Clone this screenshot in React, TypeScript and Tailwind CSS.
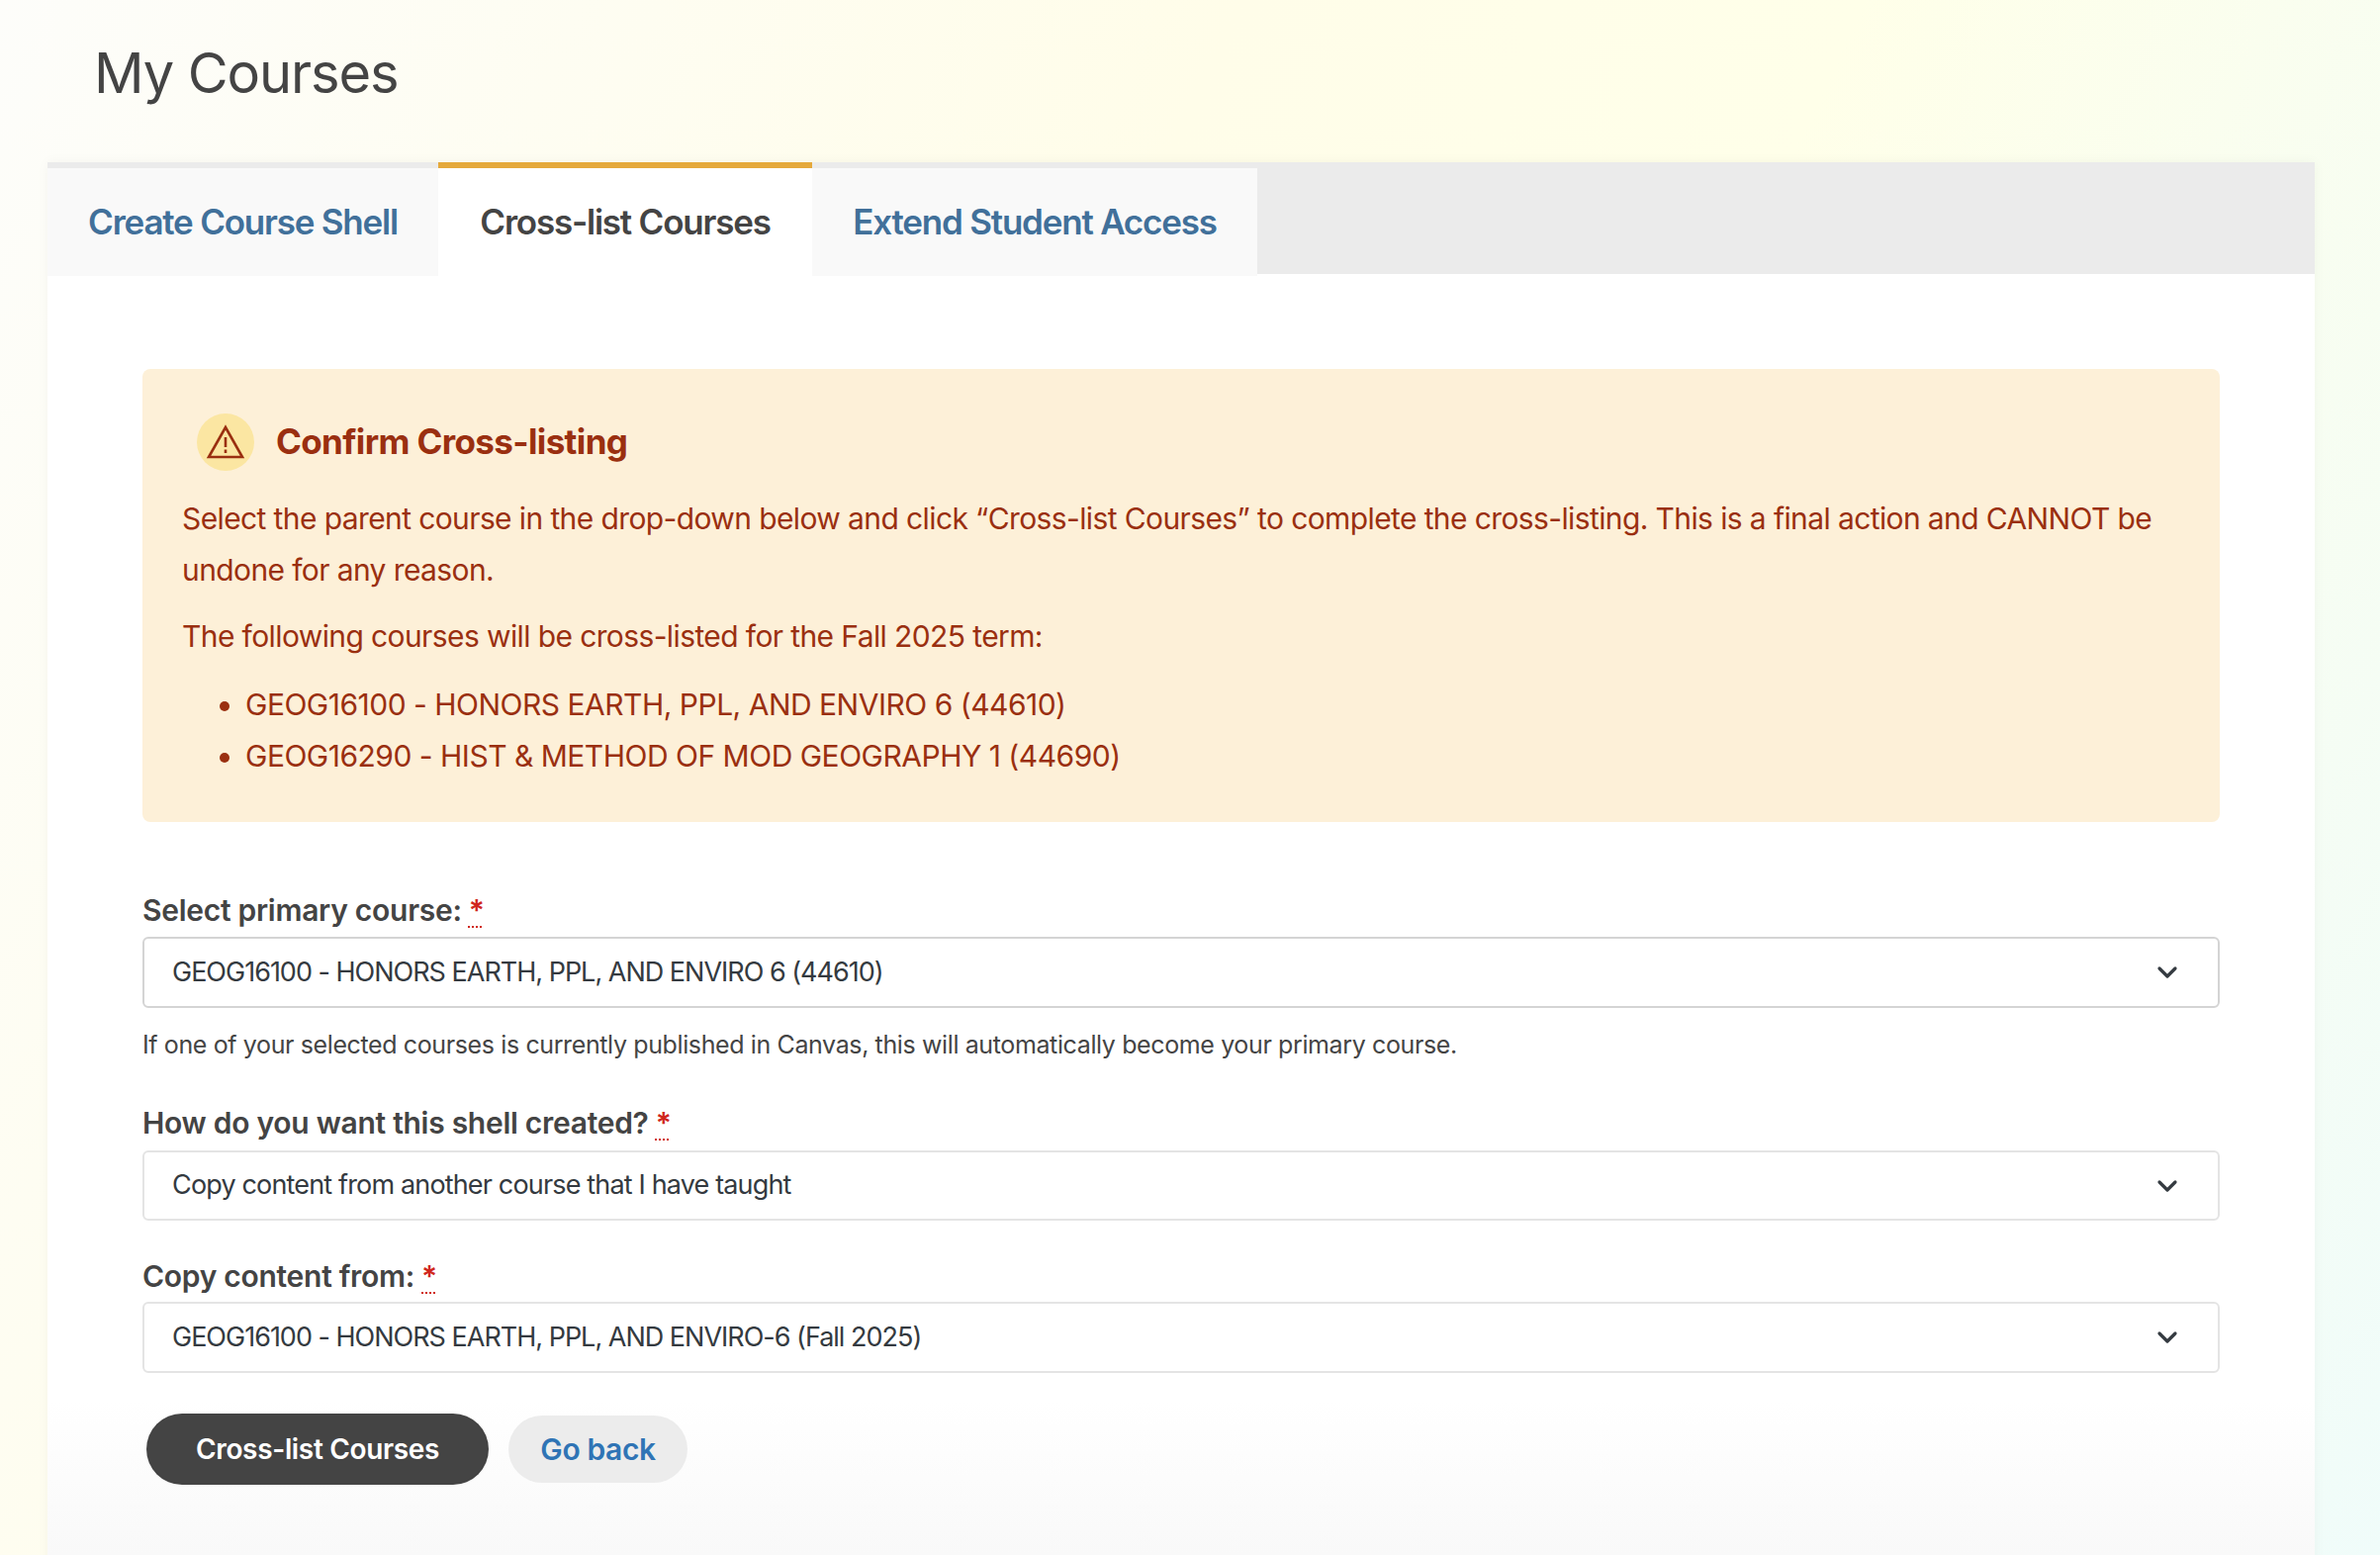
import React from 'react';
import { ChevronDown } from 'lucide-react';

const Required = () => (
  <span className="ml-[7px] text-[#d0261c] underline decoration-dotted decoration-2 underline-offset-[5px]">*</span>
);

const FakeSelect = ({ value, border, height, tracking }: { value: string; border: string; height: string; tracking: string }) => (
  <div className={`flex items-center justify-between rounded-[6px] border-2 bg-white pl-[28px] pr-[35px] text-[27px] text-[#343a40] ${border} ${height}`}>
    <span className={tracking}>{value}</span>
    <ChevronDown className="h-[32px] w-[32px] text-[#343a40]" strokeWidth={2.4} />
  </div>
);

const App = () => {
  return (
    <div className="h-[1572px] overflow-hidden bg-[linear-gradient(115deg,#fdfdfa_0%,#fffde9_40%,#ffffe9_60%,#f0fcfa_100%)] pl-[48px] pr-[66px] font-['Inter','Noto_Sans',sans-serif] text-[#444]">
      <div className="flex h-[164px] items-start pl-[47px] pt-[38px]">
        <h1 className="text-[56px] leading-[72px] font-normal tracking-[-1.1px] text-[#444]">My Courses</h1>
      </div>

      <div className="h-full bg-white shadow-[0_0_12px_rgba(0,0,0,0.04)]">
        {/* Tabs */}
        <div className="flex h-[113px] items-start bg-[#ebebeb]">
          <a className="mt-[6px] flex h-[109px] w-[395px] items-center justify-center bg-[#f9f9f9] text-[35px] font-semibold tracking-[-1.22px] text-[#41709a]">Create Course Shell</a>
          <a className="flex h-[115px] w-[378px] items-center justify-center border-t-[6px] border-[#e5a93b] bg-white text-[35px] font-semibold tracking-[-1.22px] text-[#444]">Cross-list Courses</a>
          <a className="mt-[6px] flex h-[109px] w-[450px] items-center justify-center bg-[#f9f9f9] text-[35px] font-semibold tracking-[-1.22px] text-[#41709a]">Extend Student Access</a>
        </div>

        <div className="h-[1295px] bg-[linear-gradient(to_bottom,#fff_0%,#fff_88%,#f9f9f9_100%)] px-[96px] pt-[96px]">
          {/* Alert */}
          <div className="rounded-[8px] bg-[#fdf0d8] pb-[41px] pl-[40px] pr-[40px] pt-[45px] text-[30px] leading-[52px] tracking-[-0.61px] text-[#9a2f10]">
            <div className="ml-[15px] flex h-[58px] items-center gap-[22px]">
              <span className="flex h-[58px] w-[58px] items-center justify-center rounded-full bg-[#fbe6a2]">
                <svg width="40" height="36" viewBox="0 0 40 36" fill="none" stroke="#9a2f10" strokeWidth="2.6">
                  <path d="M20 3 L37 33 H3 Z" strokeLinejoin="miter" />
                  <path d="M20 13 V23" />
                  <path d="M20 25.5 V29" />
                </svg>
              </span>
              <h2 className="-translate-y-[1px] text-[35px] font-bold tracking-[-0.64px]">Confirm Cross-listing</h2>
            </div>
            <p className="mt-[22px]">
              Select the parent course in the drop-down below and click “Cross-list Courses” to complete the cross-listing. This is a final action and CANNOT be undone for any reason.
            </p>
            <p className="mt-[15px]">The following courses will be cross-listed for the Fall 2025 term:</p>
            <ul className="mt-[17px] list-disc pl-[64px] tracking-[-0.5px]">
              <li>GEOG16100 - HONORS EARTH, PPL, AND ENVIRO 6 (44610)</li>
              <li>GEOG16290 - HIST &amp; METHOD OF MOD GEOGRAPHY 1 (44690)</li>
            </ul>
          </div>

          {/* Form */}
          <label className="mb-[7px] mt-[69px] block text-[30px] leading-[40px] font-semibold tracking-[-0.28px] text-[#444]">
            Select primary course:<Required />
          </label>
          <FakeSelect value="GEOG16100 - HONORS EARTH, PPL, AND ENVIRO 6 (44610)" border="border-[#d4d4d4]" height="h-[72px]" tracking="tracking-[-1px]" />
          <p className="mt-[18px] text-[25px] leading-[38px] tracking-[-0.38px] text-[#444]">
            If one of your selected courses is currently published in Canvas, this will automatically become your primary course.
          </p>

          <label className="mb-[8px] mt-[40px] block text-[30px] leading-[40px] font-semibold tracking-[-0.28px] text-[#444]">
            How do you want this shell created?<Required />
          </label>
          <FakeSelect value="Copy content from another course that I have taught" border="border-[#e4e4e4]" height="h-[71px]" tracking="tracking-[-0.84px]" />

          <label className="mb-[6px] mt-[36px] block text-[30px] leading-[40px] font-semibold tracking-[-0.28px] text-[#444]">
            Copy content from:<Required />
          </label>
          <FakeSelect value="GEOG16100 - HONORS EARTH, PPL, AND ENVIRO-6 (Fall 2025)" border="border-[#e4e4e4]" height="h-[72px]" tracking="tracking-[-1px]" />

          <div className="ml-[4px] mt-[41px] flex items-center gap-[20px]">
            <button className="h-[72px] w-[346px] rounded-full bg-[#444] text-[28px] font-semibold tracking-[-0.34px] text-white">Cross-list Courses</button>
            <button className="h-[68px] w-[181px] rounded-full bg-[#ececec] text-[30px] font-semibold tracking-[-0.4px] text-[#2f74b5]">Go back</button>
          </div>
        </div>
      </div>
    </div>
  );
};

export default App;
